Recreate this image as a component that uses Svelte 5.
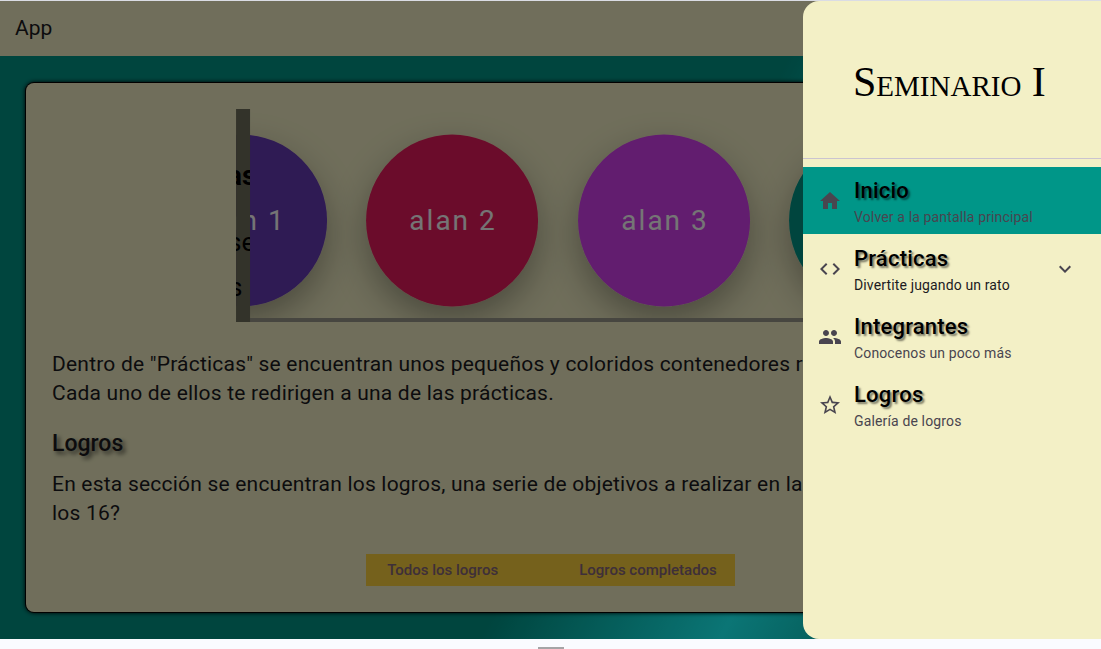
<script>
  const circles = [
    { label: 'alan 1', x: 5, color: '#673ab7' },
    { label: 'alan 2', x: 216, color: '#e91e5f' },
    { label: 'alan 3', x: 428, color: '#d541f1' },
    { label: '', x: 639, color: '#009688' }
  ];

  const items = [
    {
      title: 'Inicio',
      text: 'Volver a la pantalla principal',
      icon: 'M10 20v-6h4v6h5v-8h3L12 3 2 12h3v8z',
      active: true
    },
    {
      title: 'Prácticas',
      text: 'Divertite jugando un rato',
      icon: 'M9.4 16.6 4.8 12l4.6-4.6L8 6l-6 6 6 6 1.4-1.4zm5.2 0 4.6-4.6-4.6-4.6L16 6l6 6-6 6-1.4-1.4z',
      expandable: true
    },
    {
      title: 'Integrantes',
      text: 'Conocenos un poco más',
      icon: 'M16 11c1.66 0 2.99-1.34 2.99-3S17.66 5 16 5s-3 1.34-3 3 1.34 3 3 3zm-8 0c1.66 0 2.99-1.34 2.99-3S9.66 5 8 5 5 6.34 5 8s1.34 3 3 3zm0 2c-2.33 0-7 1.17-7 3.5V19h14v-2.5C15 14.17 10.33 13 8 13zm8 0c-.29 0-.62.02-.97.05 1.16.84 1.97 1.97 1.97 3.45V19h6v-2.5c0-2.33-4.67-3.5-7-3.5z'
    },
    {
      title: 'Logros',
      text: 'Galería de logros',
      icon: 'm22 9.24-7.19-.62L12 2 9.19 8.63 2 9.24l5.46 4.73L5.82 21 12 17.27 18.18 21l-1.63-7.03L22 9.24zM12 15.4l-3.76 2.27 1-4.28-3.32-2.88 4.38-.38L12 6.1l1.71 4.04 4.38.38-3.32 2.88 1 4.28L12 15.4z'
    }
  ];
</script>

<div class="page">
  <div class="stage">
    <header class="toolbar">App</header>
    <main class="content">
      <article class="card">
        <svg class="preview" viewBox="0 0 628 213" role="img" aria-label="Contenedores de prácticas">
          <defs>
            <filter id="shade" x="-40%" y="-40%" width="180%" height="190%">
              <feDropShadow dx="0" dy="14" stdDeviation="17" flood-color="#000" flood-opacity="0.32" />
            </filter>
            <clipPath id="strip"><rect width="14" height="213" /></clipPath>
          </defs>
          {#each circles as c}
            <circle cx={c.x} cy="111.5" r="86" fill={c.color} filter="url(#shade)" />
            {#if c.label}
              <text class="label" x={c.x + 1} y="121" text-anchor="middle">{c.label}</text>
            {/if}
          {/each}
          <rect y="209" width="628" height="4" fill="#9b9a8c" />
          <rect width="14" height="213" fill="#706f5c" />
          <g clip-path="url(#strip)">
            <text class="bold" x="-9" y="76">as</text>
            <text class="thin" x="-8" y="142">se</text>
            <text class="thin" x="-7" y="187">s</text>
          </g>
        </svg>
        <p>Dentro de "Prácticas" se encuentran unos pequeños y coloridos contenedores redondos.<br />Cada uno de ellos te redirigen a una de las prácticas.</p>
        <h2>Logros</h2>
        <p>En esta sección se encuentran los logros, una serie de objetivos a realizar en la página.<br />los 16?</p>
        <div class="tabs">
          <button type="button">Todos los logros</button>
          <button type="button">Logros completados</button>
        </div>
      </article>
    </main>
    <div class="scrim"></div>
    <aside class="drawer">
      <div class="brand">Seminario I</div>
      <nav>
        {#each items as item}
          <svelte:element
            this={item.expandable ? 'button' : 'a'}
            class="item"
            class:active={item.active}
            class:dark={item.expandable}
            href={item.expandable ? undefined : '#top'}
            type={item.expandable ? 'button' : undefined}
          >
            <svg viewBox="0 0 24 24" aria-hidden="true"><path d={item.icon} /></svg>
            <span class="words">
              <span class="title">{item.title}</span>
              <span class="sub">{item.text}</span>
            </span>
            {#if item.expandable}
              <svg viewBox="0 0 24 24" aria-hidden="true"><path d="M16.59 8.59 12 13.17 7.41 8.59 6 10l6 6 6-6z" /></svg>
            {/if}
          </svelte:element>
        {/each}
      </nav>
    </aside>
  </div>
  <footer><span class="handle"></span></footer>
</div>

<style>
  :global(body) {
    margin: 0;
    font-family: Roboto, sans-serif;
  }
  .page {
    height: 100vh;
    display: flex;
    flex-direction: column;
    box-sizing: border-box;
    border-top: 1px solid #dadce4;
    overflow: hidden;
  }
  .stage {
    position: relative;
    flex: 1;
    min-height: 0;
    display: flex;
    flex-direction: column;
    overflow: hidden;
  }
  .toolbar {
    flex: none;
    height: 55px;
    padding: 0 15px;
    line-height: 55px;
    font-size: 21px;
    color: #1c1b1f;
    background: #f3f0c6;
  }
  .content {
    flex: 1;
    padding: 27px 26px;
    background: linear-gradient(118deg, #009688 56%, #18ffff 73%, #009688 90%);
  }
  .card {
    height: 100%;
    box-sizing: border-box;
    display: flex;
    flex-direction: column;
    padding: 26px;
    border-radius: 8px;
    background: #f3f0c6;
    box-shadow: 0 0 0 1px #000, 0 0 4px 1px #000;
    color: #1c1b1f;
  }
  .preview {
    display: block;
    flex: none;
    width: 63%;
    height: 213px;
    align-self: center;
    overflow: hidden;
  }
  .label {
    font-size: 28px;
    letter-spacing: 2px;
    fill: #fff;
  }
  .bold {
    font-size: 28px;
    font-weight: 700;
  }
  .thin {
    font-size: 26px;
  }
  p {
    margin: 0;
    font-size: 21px;
    line-height: 29px;
    letter-spacing: 0.01em;
    white-space: nowrap;
  }
  .preview + p {
    margin-top: 28px;
  }
  h2 {
    margin: 22px 0 12px;
    font-size: 23px;
    line-height: 28px;
    font-weight: 500;
    text-shadow: 3px 3px 4px rgba(0, 0, 0, 0.6);
  }
  .tabs {
    display: flex;
    align-self: center;
    margin-top: 26px;
    background: #fed33d;
  }
  .tabs button {
    height: 32px;
    padding: 0 18px 0 21px;
    border: 0;
    background: none;
    font: 500 15px Roboto, sans-serif;
    color: #87677c;
  }
  .tabs button:first-child {
    padding-right: 60px;
  }
  .scrim {
    position: absolute;
    inset: 0;
    background: rgba(0, 0, 0, 0.54);
  }
  .drawer {
    position: absolute;
    top: 0;
    right: 0;
    bottom: 0;
    width: 298px;
    max-width: 90%;
    border-radius: 16px 0 0 16px;
    background: #f3f0c6;
    overflow: hidden;
  }
  .brand {
    height: 157px;
    padding: 0 50px;
    border-bottom: 1px solid #cac4d0;
    font: small-caps 42px/163px "Liberation Serif", serif;
    white-space: nowrap;
    color: #000;
  }
  nav {
    padding-top: 8px;
    display: flex;
    flex-direction: column;
    gap: 1px;
  }
  .item {
    display: flex;
    align-items: center;
    gap: 12px;
    height: 67px;
    padding: 0 24px 0 15px;
    border: 0;
    background: none;
    font-family: Roboto, sans-serif;
    text-align: left;
    text-decoration: none;
    color: #49454f;
  }
  .item.active {
    background: #009688;
  }
  .item svg {
    flex: none;
    width: 24px;
    height: 24px;
    fill: #49454f;
  }
  .words {
    flex: 1;
    display: flex;
    flex-direction: column;
    padding-top: 5px;
  }
  .title {
    font-size: 22px;
    line-height: 28px;
    font-weight: 500;
    letter-spacing: 0.01em;
    color: #000;
    text-shadow: 2px 2px 2px rgba(0, 0, 0, 0.5);
  }
  .sub {
    font-size: 14px;
    line-height: 24px;
    letter-spacing: 0.01em;
  }
  .dark .sub {
    color: #1c1b1f;
  }
  footer {
    flex: none;
    height: 10px;
    display: flex;
    justify-content: center;
    align-items: flex-end;
    background: #fafbff;
  }
  .handle {
    width: 26px;
    height: 2px;
    background: #a5a5a7;
  }
</style>
